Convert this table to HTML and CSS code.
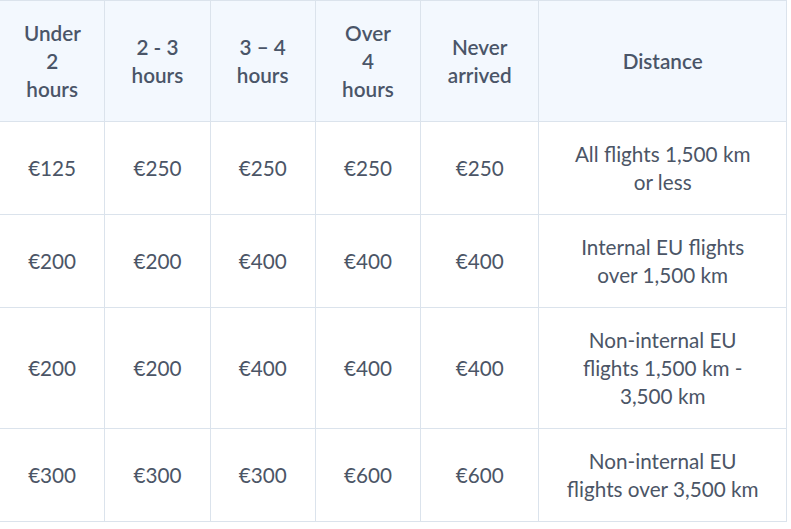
FILE: index.html
```html
<!DOCTYPE html>
<html>
<head>
<meta charset="utf-8">
<link rel="stylesheet" href="styles.css">
</head>
<body>
<table class="comp">
  <colgroup>
    <col class="c1"><col class="c2"><col class="c3"><col class="c4"><col class="c5"><col class="c6">
  </colgroup>
  <thead>
    <tr>
      <th>Under 2 hours</th>
      <th>2 - 3 hours</th>
      <th>3 – 4 hours</th>
      <th>Over 4 hours</th>
      <th>Never arrived</th>
      <th class="dist">Distance</th>
    </tr>
  </thead>
  <tbody>
    <tr><td>€125</td><td>€250</td><td>€250</td><td>€250</td><td>€250</td><td class="dist">All flights 1,500 km or less</td></tr>
    <tr><td>€200</td><td>€200</td><td>€400</td><td>€400</td><td>€400</td><td class="dist">Internal EU flights over 1,500 km</td></tr>
    <tr><td>€200</td><td>€200</td><td>€400</td><td>€400</td><td>€400</td><td class="dist">Non-internal EU flights 1,500 km - 3,500 km</td></tr>
    <tr><td>€300</td><td>€300</td><td>€300</td><td>€600</td><td>€600</td><td class="dist">Non-internal EU flights over 3,500 km</td></tr>
  </tbody>
</table>
</body>
</html>
```
FILE: styles.css
```css
html, body {
  margin: 0;
  padding: 0;
  background: #ffffff;
}
.comp {
  border-collapse: collapse;
  table-layout: fixed;
  width: 788px;
  margin-left: -1px;
  font-family: Lato, "Open Sans", sans-serif;
  font-size: 20.7px;
  line-height: 28px;
  color: #4b5566;
}
.c1, .c2, .c3, .c4 { width: 105px; }
.c5 { width: 118px; }
.c6 { width: 247px; }
.comp th, .comp td {
  border: 1px solid #dbe3ec;
  text-align: center;
  vertical-align: middle;
  padding: 18px 24px;
}
.comp .dist {
  padding-left: 27px;
  padding-right: 27px;
}
.comp th {
  background: #f3f8fe;
  font-weight: 600;
  color: #4a5568;
}
.comp td {
  font-weight: 400;
}
```
